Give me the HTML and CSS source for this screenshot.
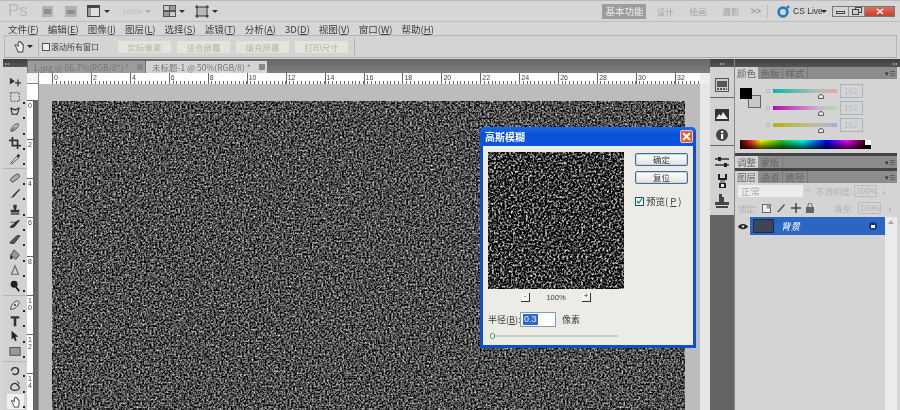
FILE: index.html
```html
<!DOCTYPE html>
<html lang="zh">
<head>
<meta charset="utf-8">
<title>Photoshop</title>
<link rel="stylesheet" href="styles.css">
</head>
<body>
<svg class="defs" width="0" height="0" aria-hidden="true">
  <filter id="noise" x="0" y="0" width="100%" height="100%" color-interpolation-filters="sRGB">
    <feTurbulence type="fractalNoise" baseFrequency="0.53" numOctaves="3" seed="4"/>
    <feColorMatrix type="matrix" values="1.500 0 0 0 -0.450  1.500 0 0 0 -0.450  1.500 0 0 0 -0.450  0 0 0 0 1"/>
  </filter>
  <filter id="noise2" x="0" y="0" width="100%" height="100%" color-interpolation-filters="sRGB">
    <feTurbulence type="fractalNoise" baseFrequency="0.47" numOctaves="2" seed="9"/>
    <feColorMatrix type="matrix" values="2.300 0 0 0 -0.950  2.300 0 0 0 -0.950  2.300 0 0 0 -0.950  0 0 0 0 1"/>
  </filter>
</svg>
<div class="app">
  <header class="appbar">
    <span class="ps">Ps</span>
    <svg class="ab i1" width="11" height="11" viewBox="0 0 11 11"><rect width="11" height="11" fill="#b2b2b2"/><rect x="2" y="3" width="7" height="5" fill="#8e8e8e"/></svg>
    <svg class="ab i2" width="12" height="11" viewBox="0 0 12 11"><rect width="12" height="11" fill="#b2b2b2"/><rect x="2" y="4" width="8" height="4" fill="#8e8e8e"/></svg>
    <svg class="ab i3" width="13" height="12" viewBox="0 0 13 12"><rect width="13" height="12" fill="#444"/><rect x="1" y="3" width="11" height="8" fill="#ddd"/><rect x="1" y="3" width="3" height="8" fill="#999"/></svg>
    <i class="caret c3"></i>
    <span class="zoomval">100%</span>
    <i class="caret faint c4"></i>
    <svg class="ab i5" width="13" height="12" viewBox="0 0 13 12"><rect width="13" height="12" fill="#555"/><rect x="1" y="1" width="5" height="4" fill="#ccc"/><rect x="7" y="1" width="5" height="4" fill="#999"/><rect x="1" y="7" width="5" height="4" fill="#999"/><rect x="7" y="7" width="5" height="4" fill="#ccc"/></svg>
    <i class="caret c5"></i>
    <svg class="ab i6" width="14" height="13" viewBox="0 0 14 13"><rect x="2" y="2" width="10" height="9" fill="#b8b8b8" stroke="#333"/><path d="M0 2h3M2 0v3M11 2h3M12 0v3M0 11h3M2 10v3M11 11h3M12 10v3" stroke="#333"/></svg>
    <i class="caret c6"></i>
    <span class="grow"></span>
    <span class="ws active">基本功能</span>
    <span class="ws">设计</span>
    <span class="ws">绘画</span>
    <span class="ws">摄影</span>
    <span class="ws more">&gt;&gt;</span>
    <span class="vsep"></span>
    <svg class="cs" width="13" height="13" viewBox="0 0 13 13"><circle cx="6" cy="7" r="4.400" fill="none" stroke="#1c7fb8" stroke-width="2.600"/><circle cx="11" cy="2" r="1.600" fill="#1c7fb8"/></svg>
    <span class="cslive">CS Live</span>
    <i class="caret dark"></i>
    <div class="winbtns">
      <span class="wb"><svg width="9" height="6" viewBox="0 0 9 6"><rect x=".5" y="3.500" width="8" height="2" fill="none" stroke="#444"/></svg></span>
      <span class="wb"><svg width="10" height="8" viewBox="0 0 10 8"><rect x="3.500" y=".5" width="6" height="5" fill="none" stroke="#444"/><rect x=".5" y="2.500" width="6" height="5" fill="#ccc" stroke="#444"/></svg></span>
      <span class="wb close"><svg width="8" height="7" viewBox="0 0 8 7"><path d="M1 1l6 5M7 1L1 6" stroke="#fff" stroke-width="1.600"/></svg></span>
    </div>
  </header>

  <nav class="menubar">
    <span>文件(<u>F</u>)</span><span>编辑(<u>E</u>)</span><span>图像(<u>I</u>)</span><span>图层(<u>L</u>)</span><span>选择(<u>S</u>)</span><span>滤镜(<u>T</u>)</span><span>分析(<u>A</u>)</span><span>3D(<u>D</u>)</span><span>视图(<u>V</u>)</span><span>窗口(<u>W</u>)</span><span>帮助(<u>H</u>)</span>
  </nav>

  <div class="optbar">
    <svg class="opthand" width="14" height="13" viewBox="0 0 14 14"><path d="M3 8L1.500 5.500 3 5l2 2V2.500h1V1.500h1V2h1v1h1v1.500h1.500V9L10 13H5z" fill="#eee" stroke="#333"/></svg>
    <i class="caret dark optcaret"></i>
    <span class="optsep"></span>
    <label class="optcheck"><i class="box"></i>滚动所有窗口</label>
    <span class="optbtn">实际像素</span>
    <span class="optbtn">适合屏幕</span>
    <span class="optbtn">填充屏幕</span>
    <span class="optbtn">打印尺寸</span>
    <span class="optsep last"></span>
  </div>

  <div class="workspace">
    <aside class="toolbox">
      <div class="dockhead"><b>▸◂</b></div>
      <div class="toolgroup first">
        <span class="tool plain"><svg viewBox="0 0 14 14"><path d="M1 2l6 4-6 4z" fill="#333"/><path d="M10.500 4v8M7 8h7" stroke="#333" stroke-width="1.500"/></svg></span>
        <span class="tool"><svg viewBox="0 0 14 14"><rect x="2" y="2" width="10" height="10" fill="none" stroke="#333" stroke-dasharray="2 1.500"/></svg></span>
        <span class="tool"><svg viewBox="0 0 14 14"><path d="M2 2c3 3 7 3 10 0-1 3-1 5-3 8-2-1-3-1-5 0-1-3-1-5-2-8z" fill="none" stroke="#333" stroke-width="1.300"/></svg></span>
        <span class="tool"><svg viewBox="0 0 14 14"><path d="M2 10c1-5 5-8 9-8 1 3-3 7-7 9z" fill="#bbb" stroke="#444"/><path d="M3 11l4-5" stroke="#333"/></svg></span>
        <span class="tool"><svg viewBox="0 0 14 14"><path d="M4 0v10h10M0 4h10v10" fill="none" stroke="#333" stroke-width="2"/></svg></span>
        <span class="tool"><svg viewBox="0 0 14 14"><path d="M2 12l7-8 2 2-8 7z" fill="#eee" stroke="#333"/><path d="M9 3l2-2 2 2-2 3z" fill="#333"/></svg></span>
      </div>
      <div class="toolgroup">
        <span class="tool"><svg viewBox="0 0 14 14"><rect x="1" y="4.500" width="12" height="5" rx="2.500" transform="rotate(-38 7 7)" fill="#aaa" stroke="#444"/></svg></span>
        <span class="tool"><svg viewBox="0 0 14 14"><path d="M1 12c2 0 3-1 4-3l7-7c1 0 1 1 1 1L7 10c-1 2-3 3-6 2z" fill="#333"/></svg></span>
        <span class="tool"><svg viewBox="0 0 14 14"><path d="M5 2h4v3L8 8h4v3H2V8h4L5 5z" fill="#333"/><rect x="2" y="12" width="10" height="1.500" fill="#333"/></svg></span>
        <span class="tool"><svg viewBox="0 0 14 14"><path d="M1 11c1-3 5-3 5-6l6-3c1 1 0 2-1 3l-4 5c-2 2-4 2-6 1z" fill="#333"/><path d="M2 5h3" stroke="#333"/></svg></span>
        <span class="tool"><svg viewBox="0 0 14 14"><path d="M1 10l8-8 4 0-7 9H2z" fill="#555" stroke="#333"/></svg></span>
        <span class="tool"><svg viewBox="0 0 14 14"><path d="M6 1l6 6-4 5-6-5z" fill="#999" stroke="#333"/><path d="M2 7c-1 2-1 5 1 5s1-3-1-5z" fill="#222"/></svg></span>
        <span class="tool"><svg viewBox="0 0 14 14"><path d="M7 2l4 10H3z" fill="none" stroke="#666" stroke-width="1.300"/></svg></span>
        <span class="tool"><svg viewBox="0 0 14 14"><circle cx="6" cy="5" r="4" fill="#222"/><path d="M8 8l4 5" stroke="#222" stroke-width="2"/></svg></span>
      </div>
      <div class="toolgroup">
        <span class="tool"><svg viewBox="0 0 14 14"><path d="M2 12c0-5 4-9 8-10l2 2c-1 4-5 8-10 8z" fill="#ddd" stroke="#333"/><circle cx="7" cy="7" r="1.200" fill="#333"/></svg></span>
        <span class="tool"><svg viewBox="0 0 14 14"><path d="M2 1.500h10v2.500H8.500v9h-3V4H2z" fill="#333"/></svg></span>
        <span class="tool"><svg viewBox="0 0 14 14"><path d="M3 1l8 7H7.500L9 12l-2 1-1.500-4L3 11z" fill="#222"/></svg></span>
        <span class="tool"><svg viewBox="0 0 14 14"><rect x="1" y="3" width="12" height="9" fill="#999" stroke="#444"/></svg></span>
      </div>
      <div class="toolgroup">
        <span class="tool"><svg viewBox="0 0 14 14"><path d="M3 7a4 4 0 1 1 5 4M7 3c3 0 5 2 4 5s-5 4-7 2" fill="none" stroke="#333" stroke-width="1.500"/></svg></span>
        <span class="tool"><svg viewBox="0 0 14 14"><path d="M2 9c0-3 3-5 5-5s5 3 5 5-3 3-5 3-5-1-5-3z" fill="none" stroke="#333" stroke-width="1.500"/><path d="M9 1l3 3-3 2" fill="none" stroke="#333"/></svg></span>
        <span class="tool hand"><svg viewBox="0 0 14 14"><path d="M3 8L1.500 5.500 3 5l2 2V2.500h1V1.500h1V2h1v1h1v1.500h1.500V9L10 13H5z" fill="#fff" stroke="#333"/></svg></span>
        <span class="tool"><svg viewBox="0 0 14 14"><circle cx="6" cy="6" r="4" fill="#ddd" stroke="#333" stroke-width="1.500"/><path d="M9 9l4 4" stroke="#333" stroke-width="2"/></svg></span>
      </div>
    </aside>

    <main class="docarea">
      <div class="tabs">
        <span class="tab">1.jpg @ 66.7%(RGB/8*) *<i class="tabx"></i></span>
        <span class="tab current">未标题-1 @ 50%(RGB/8) *<i class="tabx"></i></span>
      </div>
      <div class="rulerrow">
        <span class="corner"></span>
        <div class="hruler">
          <span>0</span><span>2</span><span>4</span><span>6</span><span>8</span><span>10</span><span>12</span><span>14</span><span>16</span><span>18</span><span>20</span><span>22</span><span>24</span><span>26</span><span>28</span><span>30</span><span>32</span>
        </div>
        <span class="scrolltop"></span>
      </div>
      <div class="canvasrow">
        <div class="vruler">
          <span>0</span><span>2</span><span>4</span><span>6</span><span>8</span><span>10</span><span>12</span><span>14</span>
        </div>
        <div class="canvas">
          <svg class="photo" width="633" height="310"><rect width="633" height="310" filter="url(#noise)"/></svg>
        </div>
        <div class="vscroll"></div>
      </div>
    </main>

    <aside class="dock">
      <div class="dockhead"><b>▸◂</b></div>
      <div class="dockgroup g1">
        <svg class="di" width="14" height="14" viewBox="0 0 14 14"><rect x=".5" y=".5" width="13" height="13" fill="#ccc" stroke="#555"/><rect x="2" y="3" width="10" height="6" fill="#555"/><path d="M2 11h10" stroke="#555" stroke-width="2" stroke-dasharray="2 1"/></svg>
      </div>
      <div class="dockgroup g2">
        <svg class="di" width="14" height="12" viewBox="0 0 14 12"><rect width="14" height="12" fill="#333"/><path d="M1 10l3-5 2 2 2-4 5 7z" fill="#eee"/></svg>
        <svg class="di" width="14" height="14" viewBox="0 0 14 14"><circle cx="7" cy="7" r="6" fill="#444"/><rect x="6" y="6" width="2.200" height="5" fill="#fff"/><rect x="6" y="3" width="2.200" height="2" fill="#fff"/></svg>
      </div>
      <div class="dockgroup g3">
        <svg class="di" width="14" height="11" viewBox="0 0 14 11"><path d="M0 2h14M0 8h14" stroke="#333" stroke-width="1.500"/><rect x="3" y="0" width="3" height="4" fill="#222"/><rect x="9" y="6" width="3" height="4" fill="#222"/></svg>
        <svg class="di" width="11" height="14" viewBox="0 0 11 14"><path d="M1 0h2v4h5V0h2v6H1z" fill="#222"/><rect x="3" y="6" width="5" height="3" fill="#888"/><rect x="2" y="9" width="7" height="5" fill="#222"/><rect x="4" y="10" width="3" height="3" fill="#eee"/></svg>
        <svg class="di" width="14" height="14" viewBox="0 0 14 14"><path d="M4 0h3v3h2v5h5v3H0V8h4z" fill="#444"/><rect x="1" y="12" width="12" height="2" fill="#444"/></svg>
      </div>
    </aside>

    <section class="panels">
      <div class="panelhead"><b>▸◂</b></div>
      <div class="ptabs">
        <span class="ptab on">颜色</span><span class="ptab">色板</span><span class="ptab">样式</span><i class="pmenu">▾≡</i>
      </div>
      <div class="colorpanel">
        <div class="swatches"><i class="bgc"></i><i class="fgc"></i></div>
        <div class="sliders">
          <div class="srow"><i class="mini"></i><span class="track r"><i class="thumb"></i></span><span class="val">192</span></div>
          <div class="srow"><i class="mini"></i><span class="track g"><i class="thumb"></i></span><span class="val">192</span></div>
          <div class="srow"><i class="mini"></i><span class="track b"><i class="thumb"></i></span><span class="val">192</span></div>
        </div>
        <div class="ramp"><span class="rampend"></span></div>
      </div>
      <div class="ptabs split">
        <span class="ptab on">调整</span><span class="ptab">蒙版</span><i class="pmenu">▾≡</i>
      </div>
      <div class="ptabs split second">
        <span class="ptab on">图层</span><span class="ptab">通道</span><span class="ptab">路径</span><i class="pmenu">▾≡</i>
      </div>
      <div class="layeropts">
        <div class="lrow">
          <span class="blend">正常</span><i class="chev">﹀</i><span class="faintlabel">不透明度:</span><span class="pct">100%</span><i class="step">›</i>
        </div>
        <div class="lrow locks">
          <span class="faintlabel">锁定:</span>
          <svg width="9" height="9" viewBox="0 0 9 9"><rect x=".5" y=".5" width="8" height="8" fill="#eee" stroke="#666"/><rect x="4.500" y=".5" width="4" height="4" fill="#999"/></svg>
          <svg width="10" height="10" viewBox="0 0 10 10"><path d="M1 9l7-8 1 1-6 7z" fill="#555"/></svg>
          <svg width="10" height="10" viewBox="0 0 10 10"><path d="M5 0v10M0 5h10" stroke="#444" stroke-width="1.500"/></svg>
          <svg width="8" height="10" viewBox="0 0 8 10"><rect y="4" width="8" height="6" fill="#666"/><path d="M2 4V2a2 2 0 0 1 4 0v2" fill="none" stroke="#666"/></svg>
          <span class="grow"></span>
          <span class="faintlabel">填充:</span><span class="pct">100%</span><i class="step">›</i>
        </div>
      </div>
      <div class="layerlist">
        <div class="layers">
          <div class="layerrow">
            <span class="eye"><svg width="10" height="7" viewBox="0 0 10 7"><path d="M0 3.500C2 0 8 0 10 3.500 8 7 2 7 0 3.500z" fill="#222"/><circle cx="5" cy="3.500" r="1.300" fill="#ccc"/></svg></span>
            <span class="layer">
              <span class="thumbnail"></span>
              <em>背景</em>
              <svg class="lock" width="8" height="8" viewBox="0 0 8 8"><circle cx="4" cy="4" r="4" fill="#123a80"/><rect x="2" y="3" width="4" height="3" fill="#fff"/></svg>
            </span>
          </div>
        </div>
        <div class="lscroll"><i></i></div>
      </div>
    </section>
  </div>

  <div class="dialog">
    <div class="dtitle"><span>高斯模糊</span><i class="dclose"><svg width="9" height="9" viewBox="0 0 9 9"><path d="M1 1l7 7M8 1L1 8" stroke="#fff" stroke-width="2"/></svg></i></div>
    <div class="dbody">
      <div class="dtop">
        <svg class="preview" width="136" height="137"><rect width="136" height="137" filter="url(#noise2)"/></svg>
        <div class="dside">
          <span class="dbtn">确定</span>
          <span class="dbtn">复位</span>
          <label class="dcheck"><i class="check"><svg width="8" height="8" viewBox="0 0 8 8"><path d="M1 4l2 2.500L7 1" fill="none" stroke="#2a9a2a" stroke-width="1.500"/></svg></i>预览(<u>P</u>)</label>
        </div>
      </div>
      <div class="dzoom"><i class="zb">-</i><span>100%</span><i class="zb">+</i></div>
      <div class="dradius">
        <span>半径(<u>B</u>):</span>
        <span class="dinput"><b>0.3</b></span>
        <span class="dunit">像素</span>
      </div>
      <div class="dslider"><i></i></div>
    </div>
  </div>
</div>
</body>
</html>
```

FILE: styles.css
```css
* { box-sizing: border-box; }
html, body { margin: 0; padding: 0; background: #d6d6d6; }
body { width: 900px; height: 410px; overflow: hidden; }
.defs { position: absolute; }
i { font-style: normal; display: block; }
.app {
  position: relative;
  width: 900px;
  height: 410px;
  display: flex;
  flex-direction: column;
  overflow: hidden;
  background: #d6d6d6;
  color: #444;
  font-family: "Noto Sans CJK SC", "Liberation Sans", sans-serif;
  font-size: 9.500px;
  filter: blur(0.5px);
}
.grow { flex: 1; }

/* app bar */
.appbar { height: 22px; flex: none; display: flex; align-items: center; padding-right: 5px; border-bottom: 1px solid #bdbdbd; border-top: 1px solid #bbb; }
.ps { font: 17px "Liberation Sans", sans-serif; color: #b8b8b8; margin-left: 8px; width: 20px; }
.ab { flex: none; }
.i1 { margin-left: 14px; }
.i2 { margin-left: 12px; }
.i3 { margin-left: 10px; }
.caret { width: 0; height: 0; border: 3px solid transparent; border-top: 3px solid #333; border-bottom: 0; flex: none; margin-left: 3px; }
.caret.faint { border-top-color: #aaa; }
.c3 { margin-left: 4px; }
.zoomval { margin-left: 12px; color: #bbb; font: 8px "Liberation Sans", sans-serif; width: 18px; }
.c4 { margin-left: 5px; }
.i5 { margin-left: 12px; }
.i6 { margin-left: 10px; }
.ws { color: #a2a2a2; font-size: 8.500px; margin-right: 16px; white-space: nowrap; }
.ws.active { background: #9c9c9c; color: #eee; width: 44px; height: 15px; line-height: 15px; text-align: center; font-size: 9.500px; margin-right: 10px; }
.ws.more { font: bold 9px "Liberation Sans", sans-serif; color: #999; margin-right: 6px; margin-left: -5px; }
.vsep { width: 1px; height: 13px; background: #bbb; }
.cs { margin-left: 9px; flex: none; }
.cslive { font: 8.500px "Liberation Sans", sans-serif; color: #333; margin-left: 3px; width: 28px; white-space: nowrap; flex: none; }
.caret.dark { border-top-color: #222; margin-left: 0; }
.winbtns { display: flex; margin-left: 5px; height: 11px; border: 1px solid #777; flex: none; }
.wb { width: 16px; display: flex; align-items: center; justify-content: center; background: #d4d4d4; border-right: 1px solid #888; }
.wb.close { width: 29px; background: linear-gradient(#e0705c, #c8402e); border: 0; }

/* menu */
.menubar { height: 13px; flex: none; display: flex; gap: 9px; padding-left: 8px; align-items: center; color: #3c3c3c; font-size: 9.500px; white-space: nowrap; line-height: 12px; }

/* options */
.optbar { height: 23px; flex: none; margin: 0 3px 0 4px; border: 1px solid #b4b4b4; border-bottom-color: #aaa; display: flex; align-items: center; background: #d4d4d4; }
.opthand { margin-left: 8px; }
.optcaret { margin-left: 6px; }
.optsep { width: 1px; height: 17px; background: #b0b0b0; margin-left: 5px; }
.optsep.last { margin-left: 0; }
.optcheck { display: flex; align-items: center; margin-left: 3px; font-size: 8px; color: #444; width: 76px; white-space: nowrap; }
.box { width: 8px; height: 8px; background: #eee; border: 1px solid #555; margin-right: 1px; flex: none; }
.optbtn { width: 53px; height: 12px; margin-right: 6px; background: #e3e5da; color: #b4b4aa; text-align: center; line-height: 12px; font-size: 8.500px; flex: none; }

/* workspace */
.workspace { flex: 1; display: flex; margin-top: 1px; min-height: 0; background: #d6d6d6; }
.dockhead, .panelhead { height: 8px; background: linear-gradient(#3e3e3e, #565656); color: #bbb; font-size: 4px; line-height: 8px; text-align: center; flex: none; overflow: hidden; }
.dockhead b, .panelhead b { font-weight: normal; }
.panelhead { text-align: right; padding-right: 3px; }
.toolbox { width: 24px; margin-left: 3px; flex: none; display: flex; flex-direction: column; background: #d2d2d2; }
.toolbox .dockhead { text-align: left; padding-left: 2px; }
.toolgroup { padding: 1px 0 2px; border-bottom: 1px solid #b4b4b4; }
.toolgroup.first { padding-top: 7px; }
.toolgroup:last-of-type { border: 0; }
.tool { display: flex; height: 15.400px; align-items: center; justify-content: center; position: relative; padding-right: 1px; }
.tool svg { width: 12px; height: 12px; }
.tool::after { content: ""; position: absolute; right: 2px; bottom: 1px; width: 2px; height: 2px; background: #222; }
.tool.plain::after { display: none; }
.tool.hand { background: #f0f0f0; margin: 0 3px 0 4px; padding-right: 0; }
.tool.hand::after { right: -1px; }

/* document area */
.docarea { width: 683px; flex: none; display: flex; flex-direction: column; min-width: 0; }
.tabs { height: 14px; flex: none; display: flex; padding-top: 2px; padding-left: 1px; gap: 1px; background: linear-gradient(#666, #7e7e7e); }
.tab { width: 117px; display: flex; align-items: center; justify-content: space-between; padding: 0 2px 0 5px; background: #9c9c9c; color: #747474; font-size: 8.500px; white-space: nowrap; overflow: hidden; }
.tab.current { width: 121px; background: #d4d4d4; color: #777; padding-left: 6px; }
.tabx { width: 6px; height: 6px; background: #888; flex: none; }
.rulerrow { height: 11px; flex: none; display: flex; }
.corner { width: 12px; background: #f4f4f4; border-right: 1px solid #888; border-bottom: 1px solid #888; }
.hruler { width: 661px; flex: none; display: flex; padding-left: 13px; overflow: hidden; background: #fff repeating-linear-gradient(90deg, #666 0 1px, transparent 1px 3.890px) 13px 8px / 100% 3px no-repeat; }
.hruler span { width: 38.950px; flex: none; border-left: 1px solid #666; font: 7px/9px "Liberation Sans", sans-serif; color: #444; padding-left: 1px; }
.scrolltop { flex: 1; background: #eee; }
.canvasrow { flex: 1; display: flex; min-height: 0; }
.vruler { width: 12px; flex: none; padding-top: 17px; overflow: hidden; background: #fff repeating-linear-gradient(180deg, #666 0 1px, transparent 1px 3.890px) 9px 17px / 3px 100% no-repeat; border-right: 1px solid #888; }
.vruler span { display: block; height: 38.950px; font: 7px/7px "Liberation Sans", sans-serif; color: #444; padding: 1px 0 0 1px; word-break: break-all; width: 6px; box-shadow: 0 -1px 0 #666, 5px -1px 0 #666; }
.canvas { width: 661px; flex: none; padding: 17px 0 0 13px; background: #bcbcbc; overflow: hidden; }
.photo { display: block; }
.vscroll { flex: 1; background: #e6e6e6; }

/* dock */
.dock { width: 25px; flex: none; display: flex; flex-direction: column; background: #646464; border-right: 1px solid #888; }
.dockgroup { background: #d2d2d2; display: flex; flex-direction: column; align-items: center; }
.g1 { height: 30px; padding-top: 11px; margin-bottom: 1px; }
.g2 { height: 47px; padding-top: 11px; gap: 7px; margin-bottom: 1px; }
.g3 { height: 69px; padding-top: 11px; gap: 6px; }

/* panels */
.panels { width: 165px; flex: none; display: flex; flex-direction: column; background: #d4d4d4; }
.ptabs { height: 12px; display: flex; flex: none; background: #8c8c8c; position: relative; font-size: 9.500px; margin-right: 3px; }
.ptab { width: 25px; text-align: center; line-height: 12px; border-right: 1px solid #777; background: #8e8e8e; color: #666; }
.ptab.on { background: #d4d4d4; color: #666; width: 23px; border: 0; }
.pmenu { position: absolute; right: 1px; top: 0; font-size: 7px; line-height: 12px; color: #333; }
.ptabs.split { border-top: 3px solid #444; height: 15px; }
.colorpanel { height: 74px; flex: none; position: relative; margin-right: 3px; }
.swatches { position: absolute; left: 5px; top: 9px; width: 21px; height: 20px; }
.fgc { position: absolute; left: 0; top: 0; width: 12px; height: 11px; background: #000; }
.bgc { position: absolute; right: 0; bottom: 0; width: 13px; height: 13px; background: #c8c8c8; border: 1px solid #666; }
.sliders { position: absolute; left: 31px; top: 5px; display: flex; flex-direction: column; gap: 4px; }
.srow { display: flex; align-items: center; height: 13px; }
.mini { width: 4px; height: 4px; border: 1px solid #bbb; }
.track { display: block; width: 64px; height: 4px; margin-left: 3px; position: relative; }
.track.r { background: linear-gradient(90deg, #12b4a8, #b8bcb8 70%, #e8a4a4); }
.track.g { background: linear-gradient(90deg, #b00ca8, #d0b0d0 70%, #a8e0a8); }
.track.b { background: linear-gradient(90deg, #b8b010, #c0c0a0 70%, #a8a8e8); }
.thumb { position: absolute; left: 45px; top: 5px; width: 6px; height: 5px; background: #eee; border: 1px solid #555; border-radius: 3px 3px 0 0; }
.val { width: 23px; height: 14px; margin-left: 3px; border: 1px solid #a6b6c0; color: #b8b8b8; font-size: 8px; line-height: 12px; padding-left: 3px; }
.ramp { position: absolute; left: 5px; top: 61px; width: 131px; height: 9px; background: linear-gradient(180deg, transparent, rgba(0,0,0,.75)), linear-gradient(90deg, #300 0, #f22 8%, #ff0 16%, #2c2 32%, #0ff 48%, #00f 66%, #f0f 82%, #300 96%); }
.rampend { position: absolute; right: 0; top: 0; width: 6px; height: 9px; background: linear-gradient(#fff 50%, #000 50%); }
.layeropts { flex: none; display: flex; flex-direction: column; margin-right: 3px; color: #b0b0b0; }
.lrow { display: flex; align-items: center; height: 16px; padding: 0 3px; gap: 2px; }
.lrow.locks { height: 18px; gap: 5px; }
.blend { width: 65px; height: 12px; background: #ececec; line-height: 12px; padding-left: 3px; color: #aaa; }
.chev { width: 9px; font-size: 6px; color: #999; }
.faintlabel { color: #b0b0b0; font-size: 8.500px; white-space: nowrap; }
.pct { width: 23px; height: 12px; border: 1px solid #bbb; line-height: 10px; padding-left: 1px; font-size: 8px; }
.step { width: 8px; font-size: 8px; color: #888; text-align: center; }
.layerlist { flex: 1; display: flex; margin-right: 3px; }
.layers { flex: 1; }
.layerrow { display: flex; height: 18px; }
.eye { width: 15px; display: flex; align-items: center; justify-content: center; }
.layer { flex: 1; background: #2c66c4; display: flex; align-items: center; padding: 0 8px 0 3px; color: #fff; }
.thumbnail { width: 21px; height: 14px; background: #3e4656; border: 1px solid #1c2c50; }
.layer em { margin-left: 7px; flex: 1; font-size: 9.500px; }
.lscroll { width: 12px; background: #ececec; }
.lscroll i { width: 0; height: 0; margin: 3px auto; border: 3px solid transparent; border-bottom: 4px solid #aaa; border-top: 0; }

/* dialog */
.dialog { position: absolute; left: 480px; top: 127px; width: 216px; height: 221px; border: 3px solid #0a4fd0; border-top: 0; border-radius: 5px 5px 0 0; background: #ecebe6; display: flex; flex-direction: column; color: #3c3c3c; }
.dtitle { height: 19px; flex: none; margin: 0 -3px; padding: 0 3px 0 5px; border-radius: 5px 5px 0 0; background: linear-gradient(#1a6ae8, #0a50d8 40%, #0a55e0); display: flex; align-items: center; justify-content: space-between; color: #fff; font-size: 10px; font-weight: bold; }
.dclose { width: 13px; height: 13px; border-radius: 2px; background: #e05c30; border: 1px solid #f0c8b8; display: flex; align-items: center; justify-content: center; }
.dbody { padding: 6px 5px 0; flex: 1; display: flex; flex-direction: column; }
.dtop { display: flex; gap: 11px; }
.preview { display: block; flex: none; }
.dside { display: flex; flex-direction: column; gap: 5px; padding-top: 1px; }
.dbtn { width: 53px; height: 13px; border: 1px solid #4a6a96; border-radius: 2px; background: linear-gradient(#fff, #e4e2da); box-shadow: inset 0 0 0 1px #c4d4ec; text-align: center; line-height: 11px; font-size: 8.500px; }
.dcheck { display: flex; align-items: center; margin-top: 5px; font-size: 9.500px; gap: 2px; }
.check { width: 9px; height: 9px; background: #fff; border: 1px solid #1c5180; display: flex; align-items: center; justify-content: center; }
.dzoom { width: 136px; margin-top: 4px; padding: 0 33px; display: flex; justify-content: space-between; align-items: center; height: 9px; font-size: 7.500px; }
.dzoom span { font-family: "Liberation Sans", sans-serif; }
.zb { width: 9px; height: 9px; border-right: 1px solid #333; border-bottom: 1px solid #333; font: 8px/6px "Liberation Sans", sans-serif; text-align: center; background: #f4f3ee; }
.dradius { display: flex; align-items: center; margin-top: 10px; height: 15px; font-size: 9px; }
.dradius > span:first-child { width: 32px; white-space: nowrap; }
.dinput { width: 36px; height: 15px; background: #fff; border: 1px solid #7f9db9; padding: 1px 2px; display: flex; align-items: center; }
.dinput b { background: #3168c8; color: #dfe8f8; font: 9px/11px "Liberation Sans", sans-serif; padding: 0 1px; }
.dunit { margin-left: 6px; }
.dslider { position: relative; height: 2px; width: 128px; margin: 8px 0 0 2px; background: #cfcbc6; }
.dslider i { position: absolute; left: 0; top: -2px; width: 5px; height: 6px; background: #fff; border: 1px solid #5aa05a; border-radius: 2px; }
```
